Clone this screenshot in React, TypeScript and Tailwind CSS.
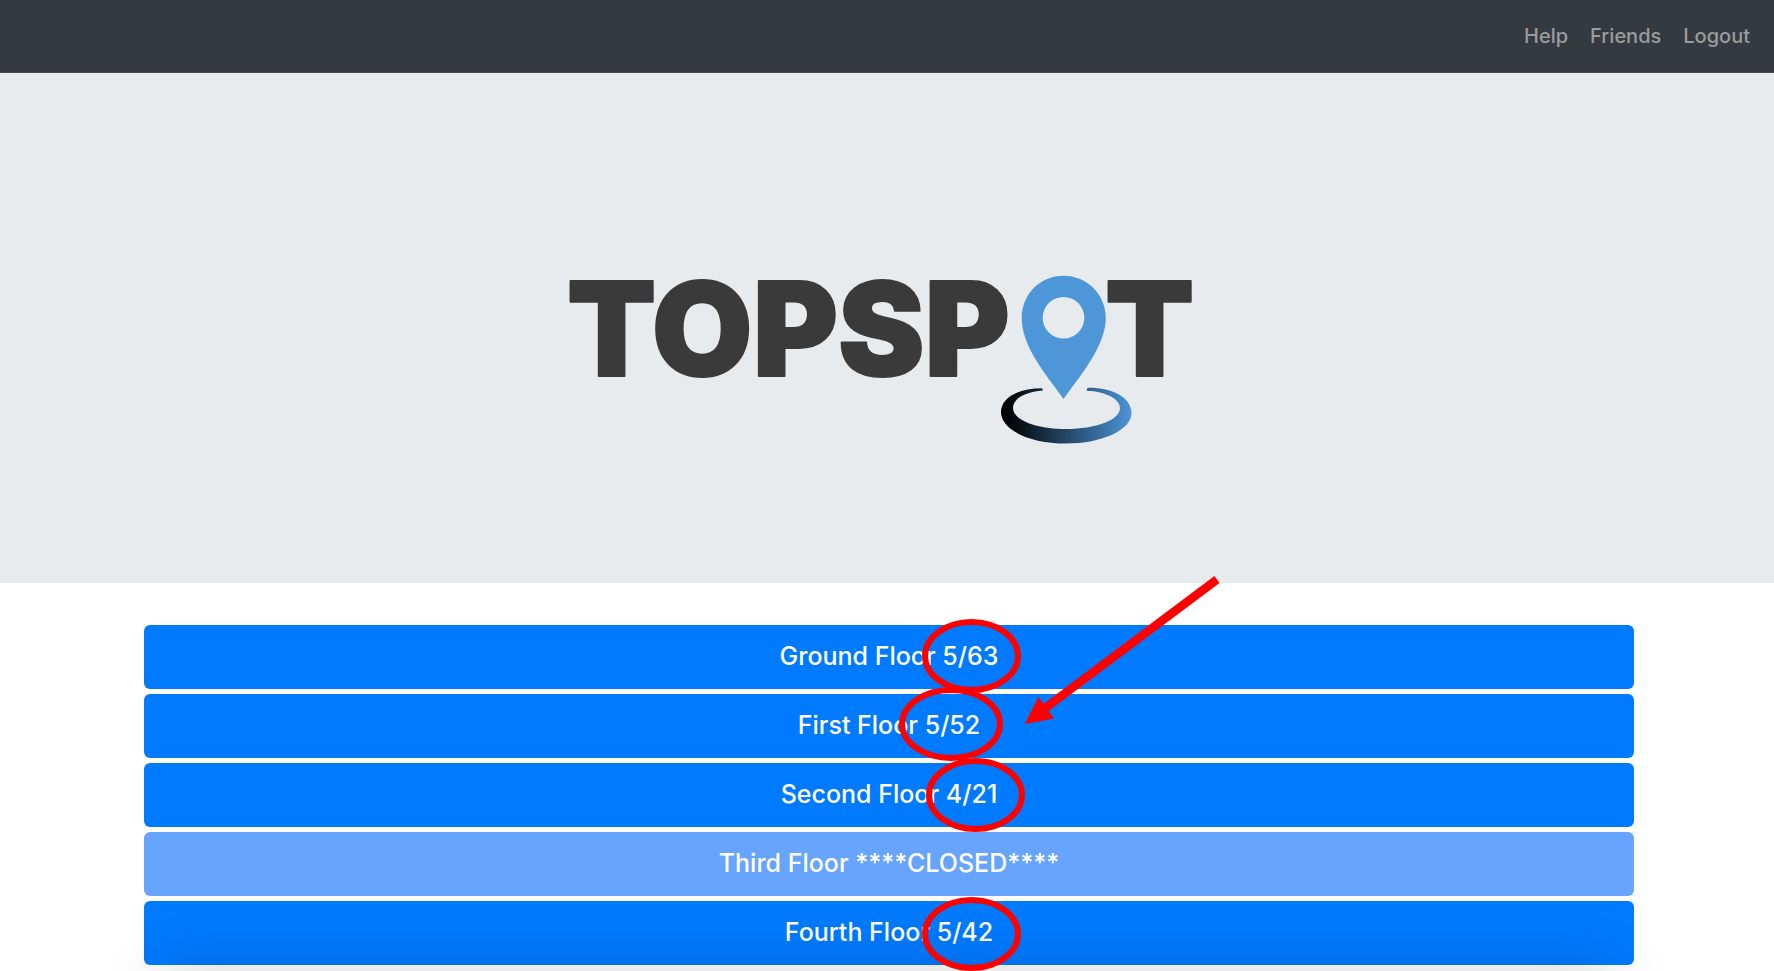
const links = ['Help', 'Friends', 'Logout'];

const floors = [
  { name: 'Ground Floor', status: '5/63' },
  { name: 'First Floor', status: '5/52' },
  { name: 'Second Floor', status: '4/21' },
  { name: 'Third Floor', status: '****CLOSED****', closed: true },
  { name: 'Fourth Floor', status: '5/42' },
];

function Logo() {
  return (
    <svg
      viewBox="547 230 680 260"
      className="h-[260px] w-[680px] max-w-full"
      role="img"
      aria-label="TOPSPOT"
    >
      <defs>
        <linearGradient id="ring" gradientUnits="userSpaceOnUse" x1="1001" y1="0" x2="1131" y2="0">
          <stop offset="0.04" stopColor="#000000" />
          <stop offset="1" stopColor="#4b94d6" />
        </linearGradient>
      </defs>
      <g
        fill="#3a3a3a"
        stroke="#3a3a3a"
        strokeWidth="2"
        strokeLinejoin="round"
        fontFamily="Inter, sans-serif"
        fontWeight="900"
        fontSize="130"
      >
        <text x="567" y="376">TOPSP</text>
        <text x="1105" y="376">T</text>
      </g>
      <path
        fill="#4d97d9"
        fillRule="evenodd"
        d="M1063.5 275.7C1040 275.7 1021.7 294.5 1021.7 318C1021.7 331 1027 344 1033 355C1042 371 1053 384 1063.5 399C1074 384 1085 371 1094 355C1100 344 1105.8 331 1105.8 318C1105.8 294.5 1087 275.7 1063.5 275.7ZM1063.5 296.9A20.8 20.8 0 1 1 1063.5 338.5A20.8 20.8 0 1 1 1063.5 296.9Z"
      />
      <path
        fill="url(#ring)"
        d="M1042 388.2C1018 388.2 1001 398 1001 412C1001 430 1030 443.5 1066 443.5C1102 443.5 1131.5 430 1131.5 413C1131.5 398 1113 387.5 1087.5 387.8L1086.5 390.7C1106 391.5 1120 399 1120 408C1120 420 1096 429 1066 429C1036 429 1013 420 1013 408C1013 399 1024 392 1043 390.5Z"
      />
    </svg>
  );
}

function Annotations() {
  return (
    <svg
      viewBox="887 560 340 411"
      className="pointer-events-none absolute -top-[23px] left-1/2 h-[411px] w-[340px]"
      aria-hidden="true"
    >
      <g fill="none" stroke="#ff0000" strokeWidth="6">
        <ellipse cx="971.5" cy="656" rx="46.5" ry="34" />
        <ellipse cx="951" cy="724" rx="49" ry="34" />
        <ellipse cx="975.5" cy="795" rx="46.5" ry="34" />
        <ellipse cx="971.5" cy="934" rx="46.5" ry="34" />
        <path d="M1217 579.5L1044 709" strokeWidth="8.5" />
      </g>
      <path fill="#ff0000" d="M1024.7 724L1038.5 697L1054 718.5Z" />
    </svg>
  );
}

export default function App() {
  return (
    <div className="overflow-hidden bg-white font-['Inter',sans-serif]">
      <nav className="flex h-[73px] items-center justify-end gap-[22px] border-b border-[#4a4e52] bg-[#343a40] pr-6 text-xl font-medium text-[#999c9f]">
        {links.map((link) => (
          <a key={link} href="#">
            {link}
          </a>
        ))}
      </nav>
      <header className="flex h-[510px] items-center justify-center bg-[#e8ebee] pt-16">
        <Logo />
      </header>
      <main className="relative pt-[42px] pr-[140px] pb-[6px] pl-36">
        <div className="flex flex-col gap-[5px]">
          {floors.map((floor) => (
            <button
              key={floor.name}
              type="button"
              disabled={floor.closed}
              className="h-16 w-full rounded-md bg-[#007aff] text-[25px] font-medium text-white disabled:bg-[#67a4fd]"
            >
              {floor.name} {floor.status}
            </button>
          ))}
        </div>
        <div className="pointer-events-none absolute top-full right-[160px] left-[160px] h-10 shadow-[0_0_60px_rgba(0,0,0,0.2)]" />
        <Annotations />
      </main>
    </div>
  );
}
